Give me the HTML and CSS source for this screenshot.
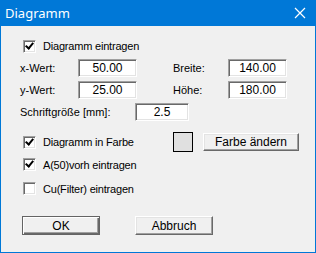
FILE: index.html
```html
<!DOCTYPE html>
<html lang="de">

<head>
    <meta charset="UTF-8">
    <title>Diagramm</title>
    <link rel="stylesheet" href="styles.css">
</head>

<body>
    <div class="window">
        <div class="titlebar">
            <span class="title">Diagramm</span>
            <svg class="close" width="12" height="12" viewBox="0 0 12 12">
                <path d="M1 1 L11 11 M11 1 L1 11" stroke="#fff" stroke-width="1.2" fill="none" />
            </svg>
        </div>

        <div class="content">
            <div class="row row-first">
                <label class="check"><span class="box on"></span>Diagramm eintragen</label>
            </div>

            <div class="row row-field">
                <span class="label lbl-x">x-Wert:</span>
                <span class="field w59">50.00</span>
                <span class="label lbl-b">Breite:</span>
                <span class="field w59">140.00</span>
            </div>

            <div class="row row-field gap4">
                <span class="label lbl-x">y-Wert:</span>
                <span class="field w59">25.00</span>
                <span class="label lbl-b">Höhe:</span>
                <span class="field w59">180.00</span>
            </div>

            <div class="row row-field gap4">
                <span class="label lbl-s">Schriftgröße [mm]:</span>
                <span class="field w54">2.5</span>
            </div>

            <div class="row row-color">
                <label class="check check-wide"><span class="box on"></span>Diagramm in Farbe</label>
                <span class="swatch"></span>
                <button class="btn btn-color">Farbe ändern</button>
            </div>

            <div class="row row-a50">
                <label class="check"><span class="box on"></span>A(50)vorh eintragen</label>
            </div>

            <div class="row row-cu">
                <label class="check"><span class="box"></span>Cu(Filter) eintragen</label>
            </div>

            <div class="row row-buttons">
                <button class="btn btn-main default">OK</button>
                <button class="btn btn-main">Abbruch</button>
            </div>
        </div>
    </div>
</body>

</html>
```

FILE: styles.css
```css
html,
body {
    margin: 0;
    padding: 0;
}

body {
    background-color: #f0f0f0;
    font-family: "Liberation Sans", Arial, sans-serif;
    font-size: 11px;
    color: #000;
}

.window {
    width: 316px;
    height: 253px;
    box-sizing: border-box;
    border: 1px solid #0078d7;
    border-top: none;
    background-color: #f0f0f0;
}

.titlebar {
    height: 26px;
    margin: 0 -1px;
    background-color: #0078d7;
    color: #fff;
    display: flex;
    align-items: center;
    justify-content: space-between;
    padding: 0 10px 0 5px;
}

.title {
    font-family: "Noto Sans", "Open Sans", sans-serif;
    font-size: 13px;
}

.content {
    padding-left: 19px;
}

.row {
    display: flex;
    align-items: center;
}

.row-first {
    margin-top: 13px;
    height: 14px;
}

.row-field {
    margin-top: 6px;
    height: 18px;
}

.gap4 {
    margin-top: 4px;
}

.row-color {
    margin-top: 11px;
    height: 20px;
}

.row-a50 {
    margin-top: 6px;
    height: 13px;
}

.row-cu {
    margin-top: 11px;
    height: 13px;
}

.row-buttons {
    margin-top: 21px;
    padding-left: 2px;
    gap: 35px;
}

/* checkboxes */
.check {
    display: flex;
    align-items: center;
    padding-left: 3px;
    letter-spacing: -0.2px;
}

.check-wide {
    width: 150px;
}

.box {
    width: 13px;
    height: 13px;
    box-sizing: border-box;
    margin-right: 7px;
    background-color: #fff;
    border-style: solid;
    border-width: 1px;
    border-color: #a0a0a0 #fff #fff #a0a0a0;
    box-shadow: inset 1px 1px 0 #696969, inset -1px -1px 0 #e3e3e3;
    position: relative;
}

.box.on::after {
    content: "";
    position: absolute;
    left: 2px;
    top: 0px;
    width: 3px;
    height: 6px;
    border: solid #000;
    border-width: 0 2px 2px 0;
    transform: translate(1px, 0) rotate(40deg);
}

/* text fields */
.label {
    display: inline-block;
}

.lbl-x {
    width: 58px;
}

.lbl-b {
    width: 55px;
    margin-left: 36px;
}

.lbl-s {
    width: 115px;
}

.field {
    height: 18px;
    box-sizing: border-box;
    background-color: #fff;
    border-style: solid;
    border-width: 1px;
    border-color: #a0a0a0 #fff #fff #a0a0a0;
    box-shadow: inset 1px 1px 0 #696969, inset -1px -1px 0 #e3e3e3;
    display: flex;
    align-items: center;
    justify-content: center;
    font-size: 12px;
}

.w59 {
    width: 59px;
}

.w54 {
    width: 54px;
}

/* colour swatch + buttons */
.swatch {
    width: 20px;
    height: 20px;
    box-sizing: border-box;
    border: 1px solid #000;
    background-color: #e0e0e0;
}

.btn {
    font-family: "Liberation Sans", Arial, sans-serif;
    font-size: 12px;
    color: #000;
    background-color: #f0f0f0;
    box-sizing: border-box;
    padding: 0;
    border-style: solid;
    border-width: 1px;
    border-color: #fff #696969 #696969 #fff;
    box-shadow: inset -1px -1px 0 #a0a0a0, inset 1px 1px 0 #e3e3e3;
}

.btn-color {
    width: 96px;
    height: 18px;
    margin-left: 10px;
}

.btn-main {
    width: 78px;
    height: 19px;
}

.btn.default {
    border-color: #646464;
    box-shadow: inset 1px 1px 0 #fff, inset -1px -1px 0 #696969, inset -2px -2px 0 #a0a0a0;
}
```
